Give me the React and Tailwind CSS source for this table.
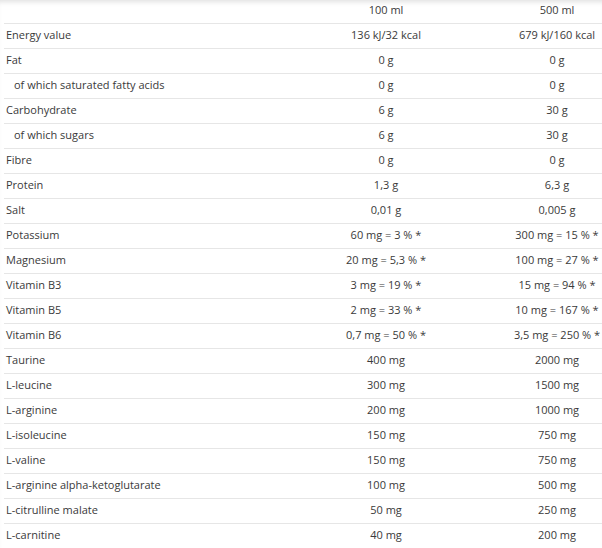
import React from "react";

const rows = [
  ["Energy value", "136 kJ/32 kcal", "679 kJ/160 kcal"],
  ["Fat", "0 g", "0 g"],
  ["of which saturated fatty acids", "0 g", "0 g", true],
  ["Carbohydrate", "6 g", "30 g"],
  ["of which sugars", "6 g", "30 g", true],
  ["Fibre", "0 g", "0 g"],
  ["Protein", "1,3 g", "6,3 g"],
  ["Salt", "0,01 g", "0,005 g"],
  ["Potassium", "60 mg = 3 % *", "300 mg = 15 % *"],
  ["Magnesium", "20 mg = 5,3 % *", "100 mg = 27 % *"],
  ["Vitamin B3", "3 mg = 19 % *", "15 mg = 94 % *"],
  ["Vitamin B5", "2 mg = 33 % *", "10 mg = 167 % *"],
  ["Vitamin B6", "0,7 mg = 50 % *", "3,5 mg = 250 % *"],
  ["Taurine", "400 mg", "2000 mg"],
  ["L-leucine", "300 mg", "1500 mg"],
  ["L-arginine", "200 mg", "1000 mg"],
  ["L-isoleucine", "150 mg", "750 mg"],
  ["L-valine", "150 mg", "750 mg"],
  ["L-arginine alpha-ketoglutarate", "100 mg", "500 mg"],
  ["L-citrulline malate", "50 mg", "250 mg"],
  ["L-carnitine", "40 mg", "200 mg"],
];

const App = () => {
  return (
    <div
      className="h-[548px] overflow-hidden bg-white text-[11px] text-[#3a3a3a] shadow-[inset_0_5px_5px_-3px_rgba(0,0,0,0.12)]"
      style={{ fontFamily: '"Open Sans", sans-serif' }}
    >
      <div className="ml-1">
        {/* header */}
        <div className="grid h-[24px] grid-cols-[256px_252px_90px] items-center border-b border-[#e6e6e6] pb-[2px]">
          <div></div>
          <div className="text-center">100 ml</div>
          <div className="text-center">500 ml</div>
        </div>
        {rows.map(([name, a, b, sub]) => (
          <div
            key={name}
            className="grid h-[25px] grid-cols-[256px_252px_90px] items-center border-b border-[#e6e6e6] pb-[2px]"
          >
            <div className={sub ? "pl-[10px]" : "pl-[2px]"}>{name}</div>
            <div className="text-center">{a}</div>
            <div className="whitespace-nowrap text-center">{b}</div>
          </div>
        ))}
      </div>
    </div>
  );
};

export default App;
